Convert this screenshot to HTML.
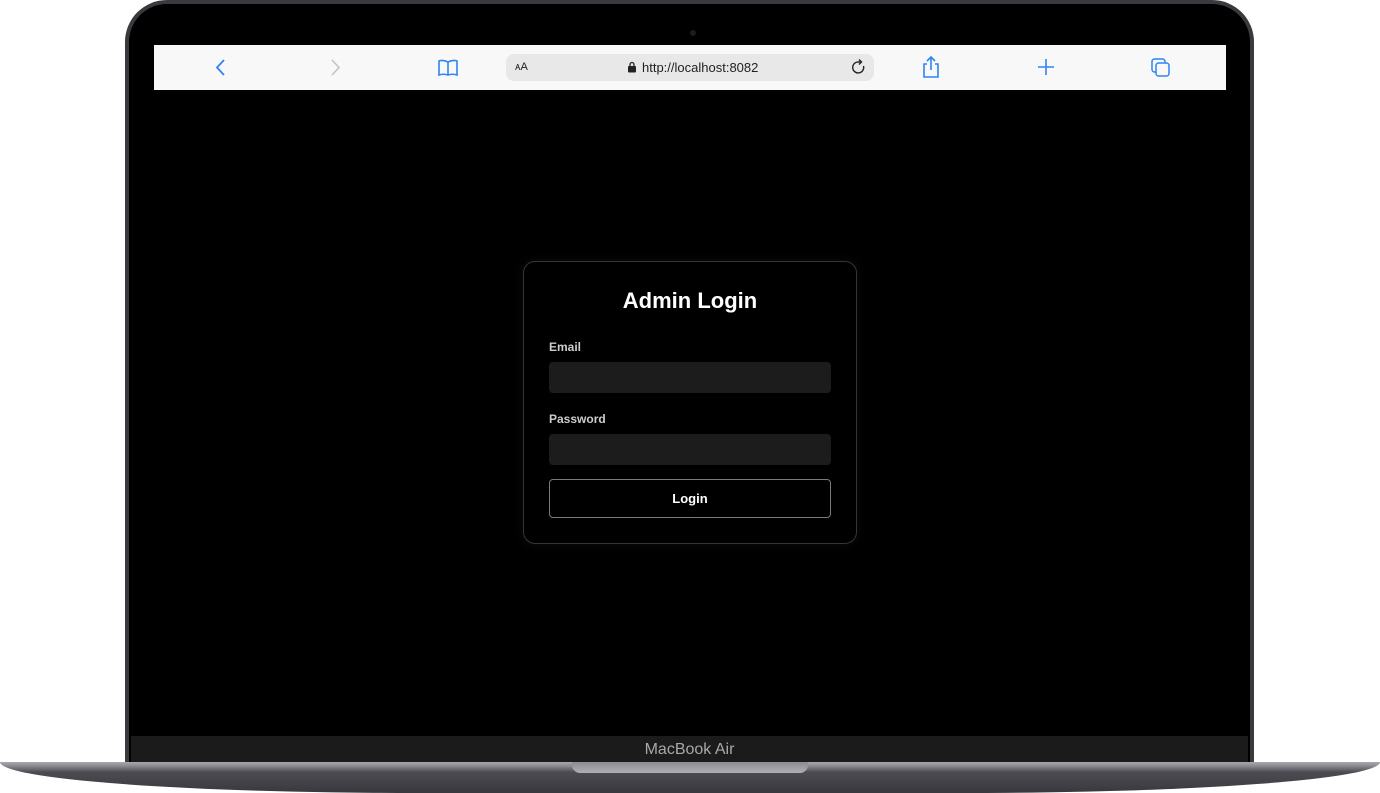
<!DOCTYPE html>
<html><head><style>
*{margin:0;padding:0;box-sizing:border-box}
body{width:1380px;height:793px;background:#fff;position:relative;overflow:hidden;font-family:"Liberation Sans",sans-serif}
.lid{position:absolute;left:125px;top:0;width:1129px;height:766px;border-radius:42px 42px 0 0;background:#3a3a3e;padding:4px 4px 0 4px}
.screen{width:100%;height:100%;background:#000;border-radius:38px 38px 0 0;position:relative}
.cam{position:absolute;left:561px;top:26px;width:6px;height:6px;border-radius:50%;background:#1c1c20}
.bar{position:absolute;left:154px;top:45px;width:1072px;height:45px;background:#f8f8f8}
.url{position:absolute;left:352px;top:9px;width:368px;height:27px;background:#e8e8e8;border-radius:8px;font-size:13px;color:#222}
.strip{position:absolute;left:131px;top:736px;width:1117px;height:27px;background:#1b1b1b;color:#a8a8a8;font-size:16px;text-align:center;line-height:27px}
.base{position:absolute;left:0;top:762px;width:1380px;height:31px;background:linear-gradient(#a9a9ad 0,#8a8a90 4px,#4c4c52 10px,#38383e 100%);border-radius:0 0 30% 30%/0 0 100% 100%}
.notch{position:absolute;left:572px;top:762px;width:236px;height:11px;background:linear-gradient(#8c8c90,#b0b0b4);border-radius:0 0 8px 8px}
.card{position:absolute;left:523px;top:261px;width:334px;height:283px;border:1px solid #353535;border-radius:12px;background:#000;box-shadow:0 0 12px rgba(255,255,255,.05)}
h1{position:absolute;top:26px;width:100%;text-align:center;color:#fff;font-size:22px;font-weight:bold}
.lbl{position:absolute;left:25px;color:#ccc;font-size:12px;font-weight:bold}
.inp{position:absolute;left:25px;width:282px;height:31px;background:#1c1c1c;border-radius:4px}
.btn{position:absolute;left:25px;top:217px;width:282px;height:39px;border:1px solid #7a7a7a;border-radius:4px;color:#fff;font-weight:bold;font-size:13px;text-align:center;line-height:37px}
</style></head><body>
<div class="lid"><div class="screen"><div class="cam"></div></div></div>
<div class="bar">
<svg style="position:absolute;left:60px;top:13px" width="14" height="19"><path d="M10 2L3 9.5L10 17" stroke="#2d84f5" stroke-width="1.8" fill="none"/></svg>
<svg style="position:absolute;left:174px;top:13px" width="14" height="19"><path d="M4 2L11 9.5L4 17" stroke="#c4c4c4" stroke-width="1.6" fill="none"/></svg>
<svg style="position:absolute;left:283px;top:13px" width="22" height="19"><path d="M2 3Q6 1.5 11 4Q16 1.5 20 3V17Q16 15.5 11 17Q6 15.5 2 17ZM11 4V17" stroke="#2d84f5" stroke-width="1.6" fill="none"/></svg>
<div class="url"><span style="position:absolute;left:9px;top:7px;font-size:11px">ᴀA</span>
<svg style="position:absolute;left:121px;top:7px" width="10" height="12"><rect x="1" y="5" width="8" height="6.5" rx="1" fill="#222"/><path d="M3 5V3.5a2 2 0 0 1 4 0V5" stroke="#222" stroke-width="1.3" fill="none"/></svg>
<span style="position:absolute;left:136px;top:6px">http://localhost:8082</span>
<svg style="position:absolute;left:345px;top:4px" width="16" height="19"><path d="M12.5 8A5.5 5.5 0 1 1 8 4H10" stroke="#222" stroke-width="1.4" fill="none"/><path d="M8 1.5L10.5 4L8 6.5" stroke="#222" stroke-width="1.4" fill="none"/></svg></div>
<svg style="position:absolute;left:767px;top:10px" width="20" height="24"><path d="M6 9H3V22H17V9H14M10 15V2M6 6L10 2L14 6" stroke="#2d84f5" stroke-width="1.6" fill="none"/></svg>
<svg style="position:absolute;left:883px;top:13px" width="18" height="18"><path d="M9 1V17M1 9H17" stroke="#2d84f5" stroke-width="1.6"/></svg>
<svg style="position:absolute;left:996px;top:12px" width="21" height="21"><rect x="2" y="2" width="13" height="13" rx="2.5" stroke="#2d84f5" stroke-width="1.5" fill="none"/><rect x="6" y="6" width="13" height="13" rx="2.5" stroke="#2d84f5" stroke-width="1.5" fill="#f8f8f8"/></svg>
</div>
<div class="card">
<h1>Admin Login</h1>
<div class="lbl" style="top:78px">Email</div>
<div class="inp" style="top:100px"></div>
<div class="lbl" style="top:150px">Password</div>
<div class="inp" style="top:172px"></div>
<div class="btn">Login</div>
</div>
<div class="strip">MacBook Air</div>
<div class="base"></div>
<div class="notch"></div>
</body></html>
